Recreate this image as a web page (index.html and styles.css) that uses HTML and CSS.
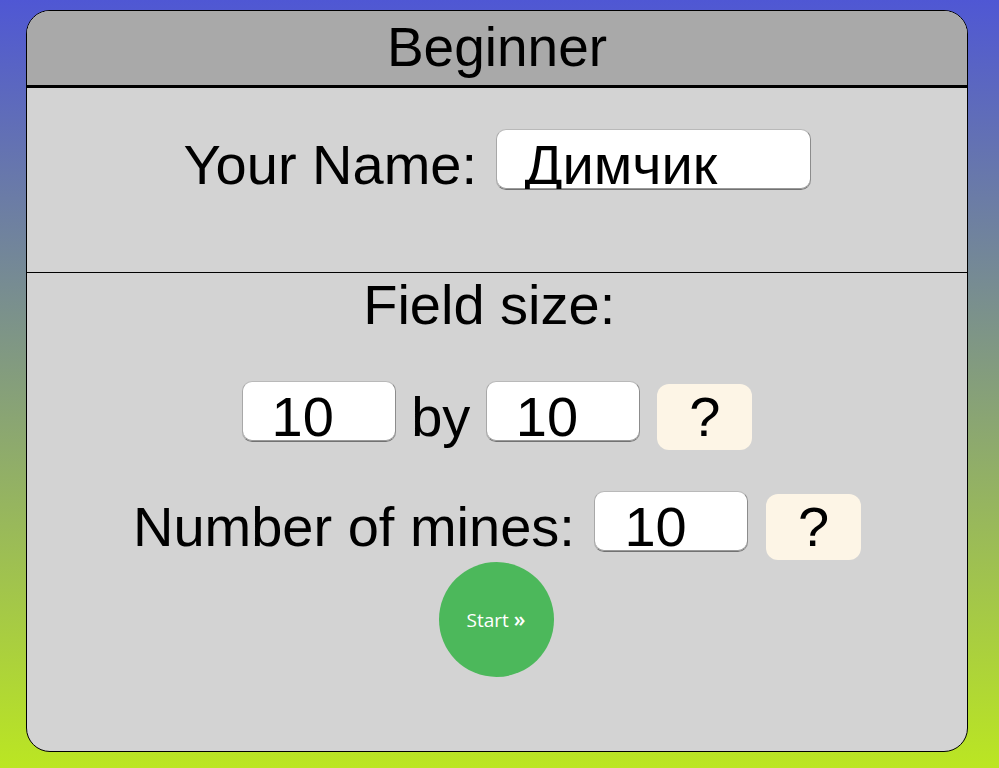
FILE: index.html
```html
<!DOCTYPE html>
<html lang="en">
<head>
<meta charset="utf-8">
<title>Minesweeper – Beginner</title>
<link rel="stylesheet" href="styles.css">
</head>
<body>
<div class="card">
  <div class="card-header">Beginner</div>
  <div class="name-section">
    <div class="row">Your Name: <input class="field field-name" type="text" value="Димчик"></div>
  </div>
  <div class="settings">
    <div class="row title">Field size:&nbsp;</div>
    <div class="row size-row"><input class="field field-num" type="text" value="10"> by <input class="field field-num" type="text" value="10"> <button class="help" type="button">?</button></div>
    <div class="row mines-row">Number of mines: <input class="field field-num after-label" type="text" value="10"> <button class="help" type="button">?</button></div>
    <div class="start-wrap"><button class="start" type="button">Start <span class="arrows">»</span></button></div>
  </div>
</div>
</body>
</html>
```

FILE: styles.css
```css
html {
  min-height: 100%;
  background: linear-gradient(to bottom, #4f57d4 0%, #bbe622 100%);
}

body {
  margin: 0;
  padding: 10px 0 0 26px;
  min-height: 768px;
  box-sizing: border-box;
  font-family: "Liberation Sans", Arial, Helvetica, sans-serif;
  color: #000;
}

.card {
  width: 940px;
  border: 1px solid #000;
  border-radius: 24px;
  overflow: hidden;
  background: #d3d3d3;
}

.card-header {
  box-sizing: border-box;
  height: 77px;
  padding-top: 4px;
  background: #a9a9a9;
  border-bottom: 3px solid #000;
  font-size: 55px;
  line-height: 64px;
  text-align: center;
}

.name-section {
  box-sizing: border-box;
  height: 185px;
  padding-top: 41px;
  border-bottom: 1px solid #000;
}

.row {
  font-size: 56px;
  line-height: 64px;
  text-align: center;
  white-space: nowrap;
}

.field {
  box-sizing: border-box;
  height: 61px;
  margin: 0;
  padding: 10px 0 0 29px;
  font-family: inherit;
  font-size: 56px;
  line-height: 49px;
  color: #000;
  background: #fff;
  border: 1px solid;
  border-color: #b9b9b9 #8c8c8c #727272 #a8a8a8;
  border-radius: 10px;
  box-shadow: inset 0 -1px 0 #9a9a9a;
  outline: none;
  vertical-align: baseline;
}

.field-name {
  width: 315px;
  margin-left: 3px;
  padding-left: 28px;
}

.field-num {
  width: 154px;
}

.after-label {
  margin-left: 4px;
}

.help {
  box-sizing: border-box;
  width: 95px;
  height: 66px;
  margin: 0 0 0 2px;
  padding: 0;
  font-family: inherit;
  font-size: 56px;
  line-height: 66px;
  color: #000;
  background: #fdf5e6;
  border: none;
  border-radius: 12px;
  vertical-align: baseline;
}

.size-row {
  margin-top: 44px;
}

.mines-row {
  margin-top: 41px;
}

.settings {
  padding-bottom: 74px;
}

.start-wrap {
  display: flex;
  justify-content: center;
  margin-top: 2px;
}

.start {
  width: 115px;
  height: 115px;
  margin: 0 0 0 -2px;
  padding: 0;
  border: none;
  border-radius: 50%;
  background: #4cb85b;
  color: #fff;
  font-family: "Open Sans", "Noto Sans", sans-serif;
  font-size: 19px;
  line-height: 22px;
}

.arrows {
  font-size: 21px;
  font-weight: 600;
}
```
